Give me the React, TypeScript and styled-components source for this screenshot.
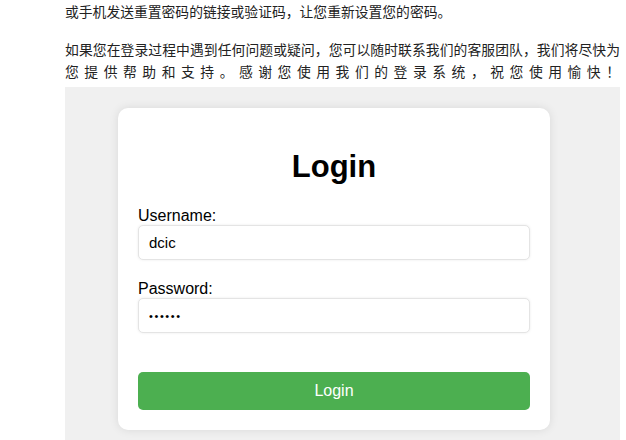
import styled, { createGlobalStyle } from 'styled-components';

const GlobalStyle = createGlobalStyle`
  html, body {
    margin: 0;
    padding: 0;
    background: #ffffff;
  }
  body {
    font-family: "Liberation Sans", "Noto Sans CJK SC", sans-serif;
    color: #222;
  }
`;

export default function App() {
  return (
    <>
      <GlobalStyle />
      <Page>
        <Paragraph>或手机发送重置密码的链接或验证码，让您重新设置您的密码。</Paragraph>
        <Paragraph $spread>
          如果您在登录过程中遇到任何问题或疑问，您可以随时联系我们的客服团队，我们将尽快为您提供帮助和支持。感谢您使用我们的登录系统，祝您使用愉快！
        </Paragraph>
        <Stage>
          <Card>
            <Title>Login</Title>
            <Field>
              <Label htmlFor="username">Username:</Label>
              <Input id="username" type="text" defaultValue="dcic" />
            </Field>
            <Field>
              <Label htmlFor="password">Password:</Label>
              <Input id="password" type="password" defaultValue="123456" $secret />
            </Field>
            <SubmitButton type="button">Login</SubmitButton>
          </Card>
        </Stage>
      </Page>
    </>
  );
}

// styled-components
const Page = styled.div`
  width: 555px;
  padding-left: 65px;
  display: flex;
  flex-direction: column;
`;

const Paragraph = styled.p<{ $spread?: boolean }>`
  margin: 0 0 16px;
  font-family: "Noto Sans CJK SC", "Liberation Sans", sans-serif;
  font-size: 13.8px;
  line-height: 22px;
  color: #222;
  text-align: justify;
  text-align-last: ${({ $spread }) => ($spread ? 'justify' : 'auto')};

  &:last-of-type {
    margin-bottom: 5px;
  }
`;

const Stage = styled.div`
  background: #f0f0f0;
  padding: 21px 70px 20px 53px;
`;

const Card = styled.div`
  background: #ffffff;
  border-radius: 10px;
  box-shadow: 0 0 10px rgba(0, 0, 0, 0.1);
  padding: 20px;
  display: flex;
  flex-direction: column;
`;

const Title = styled.h1`
  margin: 21px 0 22px;
  font-size: 31px;
  line-height: 36px;
  font-weight: 700;
  text-align: center;
  color: #000;
`;

const Field = styled.div`
  display: flex;
  flex-direction: column;
  margin-bottom: 20px;

  & + & {
    margin-bottom: 39px;
  }
`;

const Label = styled.label`
  font-size: 16px;
  line-height: 18px;
  color: #000;
`;

const Input = styled.input<{ $secret?: boolean }>`
  box-sizing: border-box;
  height: 35px;
  width: 100%;
  padding: 0 10px;
  border: 1px solid #e4e4e4;
  border-radius: 5px;
  box-shadow: 0 0 3px rgba(0, 0, 0, 0.08);
  font-family: "Liberation Sans", sans-serif;
  font-size: ${({ $secret }) => ($secret ? '11px' : '15px')};
  letter-spacing: ${({ $secret }) => ($secret ? '1.6px' : 'normal')};
  color: #000;
  background: #fff;
  outline: none;
`;

const SubmitButton = styled.button`
  height: 38px;
  width: 100%;
  border: none;
  border-radius: 5px;
  background: #4caf50;
  color: #fff;
  font-family: "Liberation Sans", sans-serif;
  font-size: 16px;
  cursor: pointer;
`;
